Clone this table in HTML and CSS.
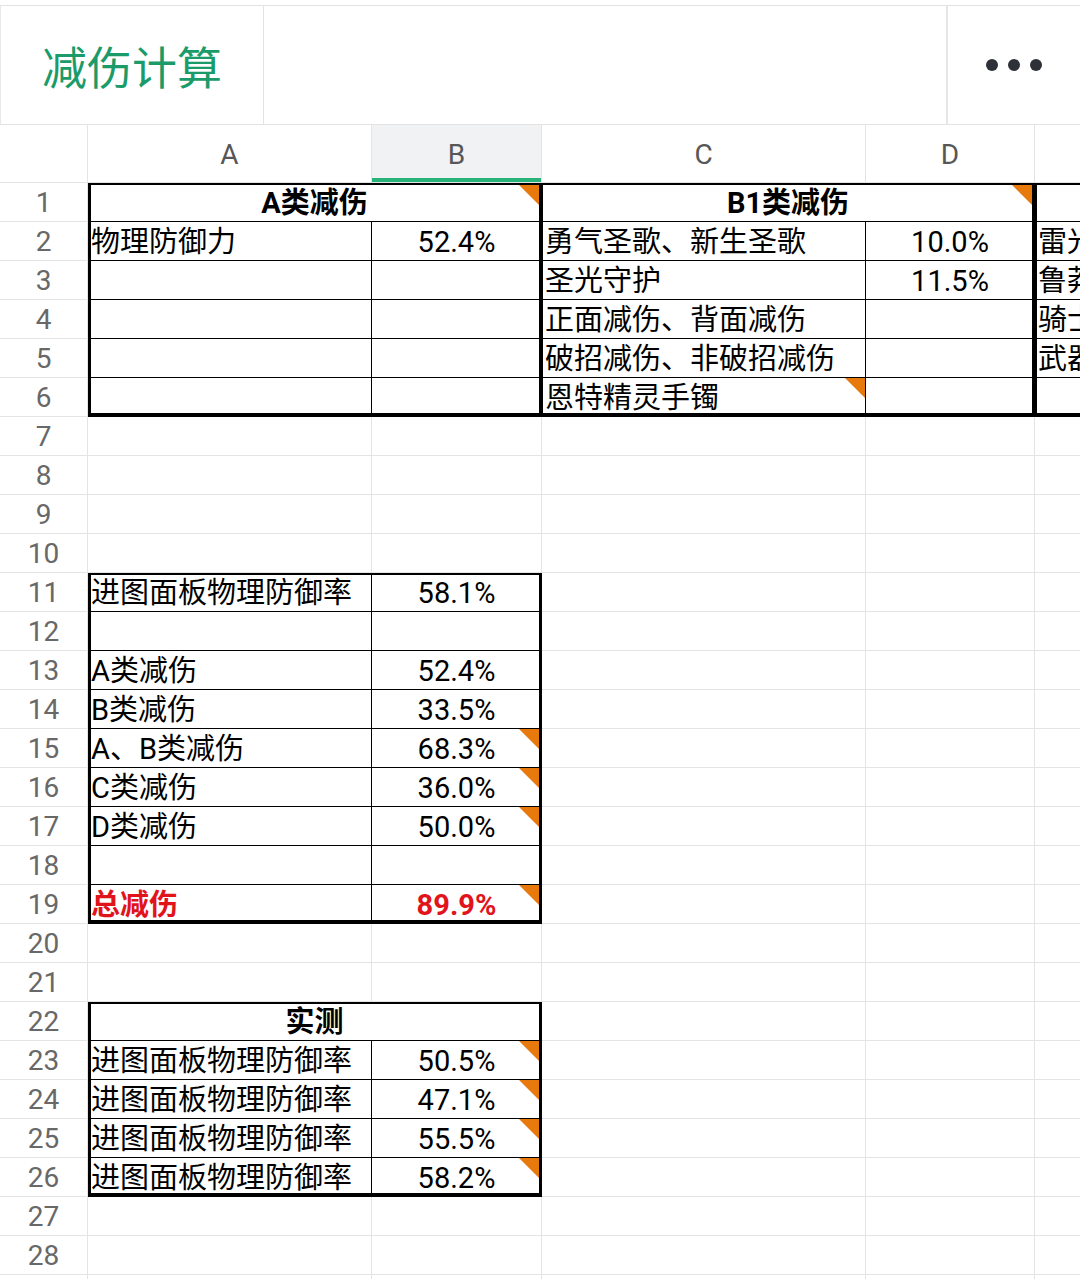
FILE: index.html
```html
<!DOCTYPE html>
<html lang="zh-CN">
<head>
<meta charset="utf-8">
<title>减伤计算</title>
<link rel="stylesheet" href="styles.css">
</head>
<body>
<header class="topbar">
  <div class="title">减伤计算</div>
  <div class="spacer"></div>
  <div class="more"><span class="dot"></span><span class="dot"></span><span class="dot"></span></div>
</header>
<main class="sheet">
  <div class="g corner"></div>
  <div class="g h">A</div>
  <div class="g h sel">B</div>
  <div class="g h">C</div>
  <div class="g h">D</div>
  <div class="g h"></div>

  <div class="g n">1</div>
  <div class="g c t L T R cm ctr bold span2">A类减伤</div>
  <div class="g c t L1 T R cm ctr bold span2">B1类减伤</div>
  <div class="g c t L2 T"></div>

  <div class="g n">2</div>
  <div class="g c t L">物理防御力</div>
  <div class="g c t R ctr">52.4%</div>
  <div class="g c t L1">勇气圣歌、新生圣歌</div>
  <div class="g c t R ctr">10.0%</div>
  <div class="g c t L2">雷光之力</div>

  <div class="g n">3</div>
  <div class="g c t L"></div>
  <div class="g c t R ctr"></div>
  <div class="g c t L1">圣光守护</div>
  <div class="g c t R ctr">11.5%</div>
  <div class="g c t L2">鲁莽之力</div>

  <div class="g n">4</div>
  <div class="g c t L"></div>
  <div class="g c t R ctr"></div>
  <div class="g c t L1">正面减伤、背面减伤</div>
  <div class="g c t R ctr"></div>
  <div class="g c t L2">骑士之力</div>

  <div class="g n">5</div>
  <div class="g c t L"></div>
  <div class="g c t R ctr"></div>
  <div class="g c t L1">破招减伤、非破招减伤</div>
  <div class="g c t R ctr"></div>
  <div class="g c t L2">武器之力</div>

  <div class="g n">6</div>
  <div class="g c t L B"></div>
  <div class="g c t R B ctr"></div>
  <div class="g c t L1 B cm">恩特精灵手镯</div>
  <div class="g c t R B ctr"></div>
  <div class="g c t L2 B"></div>

  <div class="g n">7</div><div class="g c"></div><div class="g c"></div><div class="g c"></div><div class="g c"></div><div class="g c"></div>
  <div class="g n">8</div><div class="g c"></div><div class="g c"></div><div class="g c"></div><div class="g c"></div><div class="g c"></div>
  <div class="g n">9</div><div class="g c"></div><div class="g c"></div><div class="g c"></div><div class="g c"></div><div class="g c"></div>
  <div class="g n">10</div><div class="g c"></div><div class="g c"></div><div class="g c"></div><div class="g c"></div><div class="g c"></div>

  <div class="g n">11</div>
  <div class="g c t L T">进图面板物理防御率</div>
  <div class="g c t R T ctr">58.1%</div>
  <div class="g c"></div><div class="g c"></div><div class="g c"></div>

  <div class="g n">12</div>
  <div class="g c t L"></div>
  <div class="g c t R ctr"></div>
  <div class="g c"></div><div class="g c"></div><div class="g c"></div>

  <div class="g n">13</div>
  <div class="g c t L">A类减伤</div>
  <div class="g c t R ctr">52.4%</div>
  <div class="g c"></div><div class="g c"></div><div class="g c"></div>

  <div class="g n">14</div>
  <div class="g c t L">B类减伤</div>
  <div class="g c t R ctr">33.5%</div>
  <div class="g c"></div><div class="g c"></div><div class="g c"></div>

  <div class="g n">15</div>
  <div class="g c t L">A、B类减伤</div>
  <div class="g c t R ctr cm">68.3%</div>
  <div class="g c"></div><div class="g c"></div><div class="g c"></div>

  <div class="g n">16</div>
  <div class="g c t L">C类减伤</div>
  <div class="g c t R ctr cm">36.0%</div>
  <div class="g c"></div><div class="g c"></div><div class="g c"></div>

  <div class="g n">17</div>
  <div class="g c t L">D类减伤</div>
  <div class="g c t R ctr cm">50.0%</div>
  <div class="g c"></div><div class="g c"></div><div class="g c"></div>

  <div class="g n">18</div>
  <div class="g c t L"></div>
  <div class="g c t R ctr"></div>
  <div class="g c"></div><div class="g c"></div><div class="g c"></div>

  <div class="g n">19</div>
  <div class="g c t L B bold red">总减伤</div>
  <div class="g c t R B ctr cm bold red">89.9%</div>
  <div class="g c"></div><div class="g c"></div><div class="g c"></div>

  <div class="g n">20</div><div class="g c"></div><div class="g c"></div><div class="g c"></div><div class="g c"></div><div class="g c"></div>
  <div class="g n">21</div><div class="g c"></div><div class="g c"></div><div class="g c"></div><div class="g c"></div><div class="g c"></div>

  <div class="g n">22</div>
  <div class="g c t L T R ctr bold span2">实测</div>
  <div class="g c"></div><div class="g c"></div><div class="g c"></div>

  <div class="g n">23</div>
  <div class="g c t L">进图面板物理防御率</div>
  <div class="g c t R ctr cm">50.5%</div>
  <div class="g c"></div><div class="g c"></div><div class="g c"></div>

  <div class="g n">24</div>
  <div class="g c t L">进图面板物理防御率</div>
  <div class="g c t R ctr cm">47.1%</div>
  <div class="g c"></div><div class="g c"></div><div class="g c"></div>

  <div class="g n">25</div>
  <div class="g c t L">进图面板物理防御率</div>
  <div class="g c t R ctr cm">55.5%</div>
  <div class="g c"></div><div class="g c"></div><div class="g c"></div>

  <div class="g n">26</div>
  <div class="g c t L B">进图面板物理防御率</div>
  <div class="g c t R B ctr cm">58.2%</div>
  <div class="g c"></div><div class="g c"></div><div class="g c"></div>

  <div class="g n">27</div><div class="g c"></div><div class="g c"></div><div class="g c"></div><div class="g c"></div><div class="g c"></div>
  <div class="g n">28</div><div class="g c"></div><div class="g c"></div><div class="g c"></div><div class="g c"></div><div class="g c"></div>
  <div class="g n">29</div><div class="g c"></div><div class="g c"></div><div class="g c"></div><div class="g c"></div><div class="g c"></div>
</main>
</body>
</html>
```

FILE: styles.css
```css
* { box-sizing: border-box; }

body {
  margin: 0;
  width: 1080px;
  height: 1279px;
  overflow: hidden;
  background: #fff;
  font-family: Roboto, "Noto Sans CJK SC", sans-serif;
}

.topbar {
  margin-top: 5px;
  height: 120px;
  border-top: 1px solid #e3e3e3;
  border-bottom: 1px solid #e3e3e3;
  display: grid;
  grid-template-columns: 264px 682px 134px;
}

.title {
  border-left: 1px solid #e8e8e8;
  border-right: 1px solid #e3e3e3;
  display: flex;
  align-items: center;
  justify-content: center;
  font-family: "Noto Sans CJK SC", sans-serif;
  font-size: 45px;
  color: #1b9b6a;
}

.more {
  border-left: 2px solid #e6e6e6;
  display: flex;
  align-items: center;
  justify-content: center;
  gap: 10px;
}

.dot {
  width: 12px;
  height: 12px;
  border-radius: 50%;
  background: #2e3138;
}

.sheet {
  width: 1080px;
  overflow: hidden;
  display: grid;
  grid-template-columns: 88px 284px 170px 324px 169px 300px;
  grid-template-rows: 58px;
  grid-auto-rows: 39px;
}

.g {
  position: relative;
  display: flex;
  align-items: center;
  white-space: nowrap;
  overflow: hidden;
  line-height: 1;
  border-right: 1px solid #e4e4e4;
  border-bottom: 1px solid #e4e4e4;
}

.h {
  justify-content: center;
  font-size: 28px;
  color: #575757;
  padding-top: 2px;
}

.sel {
  background: #f1f2f4;
  box-shadow: inset 0 -4px 0 #27b27a;
}

.n {
  justify-content: center;
  font-size: 28px;
  color: #686868;
  padding-top: 2px;
}

.c {
  --l: 0px;
  --t: 0px;
  --r: 0px;
  --b: 0px;
  padding-left: 3px;
  padding-top: 2px;
  font-size: 29px;
  color: #000;
  box-shadow:
    inset var(--l) 0 0 #000,
    inset 0 var(--t) 0 #000,
    inset calc(-1 * var(--r)) 0 0 #000,
    inset 0 calc(-1 * var(--b)) 0 #000;
}

.t { border-color: #000; }

.L { --l: 3px; }
.L1 { --l: 1px; }
.L2 { --l: 2px; }
.T { --t: 2px; }
.R { --r: 2px; }
.B { --b: 3px; }

.ctr {
  justify-content: center;
  padding-left: 0;
}

.bold { font-weight: 700; }
.red { color: #e1141c; }

.span2 { grid-column: span 2; }

.cm::after {
  content: "";
  position: absolute;
  top: var(--t);
  right: var(--r);
  width: 20px;
  height: 20px;
  background: #e8790c;
  clip-path: polygon(0 0, 100% 0, 100% 100%);
}
```
